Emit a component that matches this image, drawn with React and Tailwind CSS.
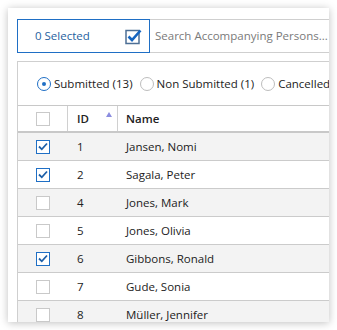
import React from "react";

const rows = [
  { id: 1, name: "Jansen, Nomi", checked: true },
  { id: 2, name: "Sagala, Peter", checked: true },
  { id: 4, name: "Jones, Mark", checked: false },
  { id: 5, name: "Jones, Olivia", checked: false },
  { id: 6, name: "Gibbons, Ronald", checked: true },
  { id: 7, name: "Gude, Sonia", checked: false },
  { id: 8, name: "Müller, Jennifer", checked: false },
];

function Check({ checked }) {
  if (checked) {
    return (
      <div className="w-[14px] h-[14px] border border-[#1f6fc5] bg-white flex items-center justify-center">
        <svg width="10" height="9" viewBox="0 0 10 9">
          <path d="M1 4.5 L3.8 7.3 L9 1.5" fill="none" stroke="#1d5fa8" strokeWidth="1.8" />
        </svg>
      </div>
    );
  }
  return <div className="w-[14px] h-[14px] border border-[#c9c9c9] bg-white" />;
}

function Radio({ on, label }) {
  return (
    <div className="flex items-center gap-[3px]">
      {on ? (
        <div className="w-[14px] h-[14px] rounded-full border border-[#1f6fc5] flex items-center justify-center">
          <div className="w-[4px] h-[4px] rounded-full bg-[#1f6fc5]" />
        </div>
      ) : (
        <div className="w-[14px] h-[14px] rounded-full border border-[#bdbdbd]" />
      )}
      <span className="whitespace-nowrap">{label}</span>
    </div>
  );
}

export default function App() {
  return (
    <div className="w-[337px] h-[330px] bg-white p-2" style={{ fontFamily: '"Open Sans", sans-serif' }}>
      <div className="w-[321px] h-[314px] bg-white overflow-hidden shadow-[0_1px_8px_rgba(0,0,0,0.25)] pl-[9px] pt-[11px] text-[11.5px] text-[#222]">
        <div className="w-[420px]">
          <div className="flex h-[34px]">
            <div className="w-[133px] border border-[#1f6fc5] flex items-center justify-between pl-[17px] pr-[7px] text-[#1f5fa0]">
              <span>0 Selected</span>
              <svg width="17" height="17" viewBox="0 0 17 17">
                <rect x="1" y="2.5" width="13" height="13" fill="none" stroke="#4d6f95" strokeWidth="1.5" />
                <path d="M3.5 8.5 L7 12 L15.5 2.5" fill="none" stroke="#1565c0" strokeWidth="2.6" />
              </svg>
            </div>
            <div className="flex-1 border-y border-r border-[#cfcfcf] flex items-center pl-[5px] text-[#7a7a7a]">
              Search Accompanying Persons...
            </div>
          </div>
          <div className="mt-[8px] border-l border-t border-[#cfcfcf]">
            <div className="h-[43px] flex items-center gap-[7px] pl-[19px]">
              <Radio on label="Submitted (13)" />
              <Radio label="Non Submitted (1)" />
              <Radio label="Cancelled" />
            </div>
            <div className="flex h-[28px] border-t border-b-2 border-[#c8c8c8] bg-white font-semibold">
              <div className="w-[50px] border-r border-[#d0d0d0] flex items-center justify-center">
                <Check checked={false} />
              </div>
              <div className="w-[50px] border-r border-[#d0d0d0] flex items-center pl-[9px] relative">
                <span>ID</span>
                <svg className="absolute right-[5px] top-[6px]" width="6" height="5" viewBox="0 0 6 5">
                  <path d="M3 0 L6 5 L0 5 Z" fill="#8b8de0" />
                </svg>
              </div>
              <div className="flex-1 flex items-center pl-[8px]">Name</div>
            </div>
            {rows.map((r, i) => (
              <div
                key={r.id}
                className={`flex h-[28px] border-b border-[#cbcbcb] ${i % 2 === 0 ? "bg-[#f3f3f3]" : "bg-white"}`}
              >
                <div className="w-[50px] flex items-center justify-center">
                  <Check checked={r.checked} />
                </div>
                <div className="w-[50px] flex items-center pl-[9px]">{r.id}</div>
                <div className="flex-1 flex items-center pl-[8px]">{r.name}</div>
              </div>
            ))}
          </div>
        </div>
      </div>
    </div>
  );
}
